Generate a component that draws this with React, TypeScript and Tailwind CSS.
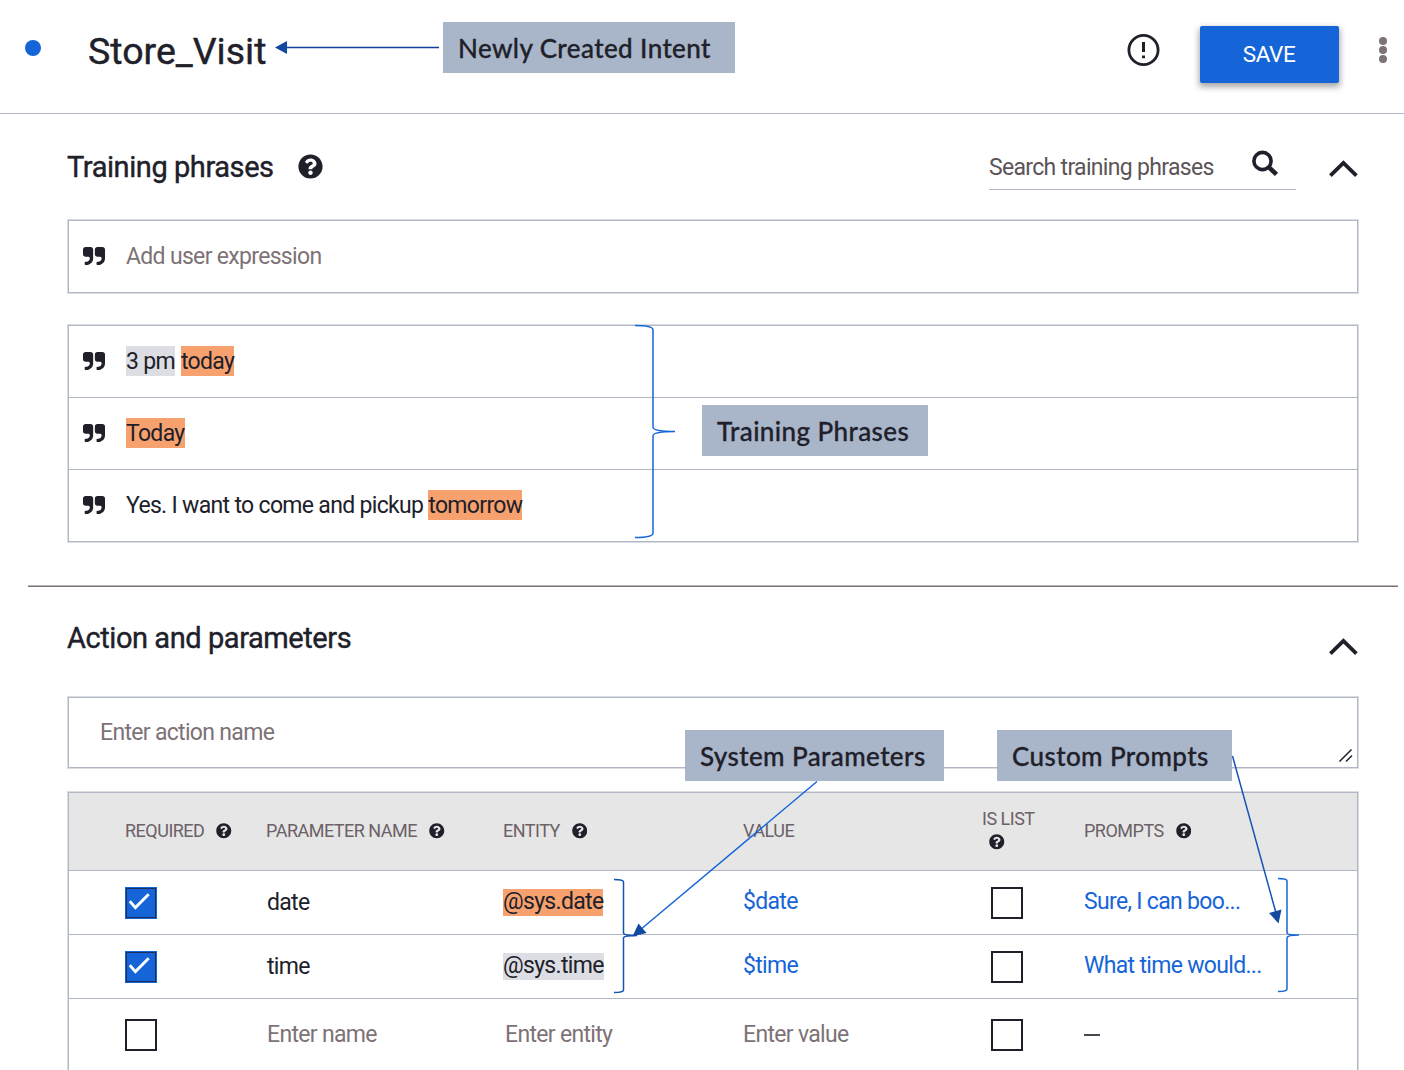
import React from "react";
import { FaQuestionCircle } from "react-icons/fa";

const roboto = "font-['Roboto','Liberation_Sans',sans-serif]";
const box = "border border-[#b0b6c3] shadow-[0_0_0_1px_#dadde3]";
const columns = "grid grid-cols-[141px_237px_240px_239px_102px_1fr] items-center pl-[56px]";
const heading = "-ml-px text-[29px] tracking-[-0.43px] text-[#20202a] [-webkit-text-stroke:0.4px_#20202a]";

function Help({ className = "" }: { className?: string }) {
  return <FaQuestionCircle className={`size-[15.5px] shrink-0 text-[#20202a] ${className}`} />;
}

function Chevron({ className = "" }: { className?: string }) {
  return (
    <svg className={`h-[20px] w-[30px] shrink-0 ${className}`} viewBox="0 0 30 20" fill="none" stroke="#20202a" strokeWidth="3.8">
      <path d="M2.4 16.7 15.4 3.9 28.4 16.7" />
    </svg>
  );
}

function Quote() {
  return (
    <svg viewBox="0 128 1664 1408" preserveAspectRatio="none" className="-mt-[2px] h-[18px] w-[22px] shrink-0" fill="#20202a">
      <path d="M768 320v704q0 104-40.5 198.5t-109.5 163.5-163.5 109.5-198.5 40.5h-64q-26 0-45-19t-19-45v-128q0-26 19-45t45-19h64q106 0 181-75t75-181v-32q0-40-28-68t-68-28h-224q-80 0-136-56t-56-136v-384q0-80 56-136t136-56h384q80 0 136 56t56 136z" />
      <path d="M1664 320v704q0 104-40.5 198.5t-109.5 163.5-163.5 109.5-198.5 40.5h-64q-26 0-45-19t-19-45v-128q0-26 19-45t45-19h64q106 0 181-75t75-181v-32q0-40-28-68t-68-28h-224q-80 0-136-56t-56-136v-384q0-80 56-136t136-56h384q80 0 136 56t56 136z" />
    </svg>
  );
}

function Mark({ tone, children }: { tone: "orange" | "gray"; children: React.ReactNode }) {
  return (
    <span className={`flex h-[30px] items-center whitespace-nowrap ${tone === "orange" ? "bg-[#f7a26e]" : "bg-[#dcdee3]"}`}>
      {children}
    </span>
  );
}

function PhraseRow({ children }: { children: React.ReactNode }) {
  return (
    <div className="flex h-[72px] items-center border-b border-[#b0b6c3] pl-[14px] last:h-[71px] last:border-b-0">
      <Quote />
      <div className="-mt-px ml-[21px] flex items-center whitespace-pre text-[#20202a]">{children}</div>
    </div>
  );
}

function Checkbox({ checked = false, className = "" }: { checked?: boolean; className?: string }) {
  return (
    <span
      className={`block size-[32px] ${className} ${
        checked ? "border border-[#1565d8] bg-[#1565d8] outline outline-[#1b2f5c] -outline-offset-2" : "border-2 border-[#20202a] bg-white"
      }`}
    >
      {checked && (
        <svg viewBox="0 0 30 30" className="size-[30px]" fill="none" stroke="#fff" strokeWidth="2.8">
          <path d="M3.8 13.3 9.4 19.6 22.7 6.2" />
        </svg>
      )}
    </span>
  );
}

function HeaderCell({ label, help = true }: { label: string; help?: boolean }) {
  return (
    <div className="flex items-center gap-[12px] pb-[1px] whitespace-nowrap">
      <span>{label}</span>
      {help && <Help />}
    </div>
  );
}

type Param = { name: string; entity: string; tone: "orange" | "gray"; value: string; prompt: string };

const params: Param[] = [
  { name: "date", entity: "@sys.date", tone: "orange", value: "$date", prompt: "Sure, I can boo..." },
  { name: "time", entity: "@sys.time", tone: "gray", value: "$time", prompt: "What time would..." },
];

function Callout({ text, className }: { text: string; className: string }) {
  return (
    <div
      className={`absolute flex h-[51px] items-center whitespace-nowrap bg-[#a9b5c8] pl-[15px] font-['Lato','Open_Sans',sans-serif] text-[26px] leading-none font-medium tracking-[0.4px] text-[#20202a] [-webkit-text-stroke:0.3px_#20202a] ${className}`}
    >
      {text}
    </div>
  );
}

export default function App() {
  return (
    <div className={`relative h-[1070px] w-[1404px] overflow-hidden bg-white text-[23px] leading-none tracking-[-0.68px] ${roboto}`}>
      <header className="flex h-[114px] items-start border-b border-[#b0b6c3] pl-[25px]">
        <span className="mt-[40px] size-[16px] rounded-full bg-[#1565d8]" />
        <h1 className="mt-[32px] ml-[47px] text-[37.5px] leading-[38px] tracking-normal text-[#20202a] [-webkit-text-stroke:0.4px_#20202a]">Store_Visit</h1>
        <svg className="mt-[33px] ml-auto size-[34px]" viewBox="0 0 34 34" fill="none" stroke="#20202a">
          <circle cx="17.5" cy="17" r="14.6" strokeWidth="2.8" />
          <path d="M17.5 9v10M17.5 22.4v2.8" strokeWidth="3" />
        </svg>
        <button className="mt-[26px] ml-[40px] flex h-[57px] w-[139px] items-center justify-center rounded-[2px] bg-[#1565d8] text-[22.5px] tracking-[-0.4px] text-white shadow-[0_3px_6px_1px_rgba(0,0,0,0.35)]">
          <span className="-mt-px -ml-px">SAVE</span>
        </button>
        <div className="mt-[37px] mr-[17px] ml-[40px] flex flex-col gap-[1px]">
          <span className="size-[8px] rounded-full bg-[#7d7276]" />
          <span className="size-[8px] rounded-full bg-[#7d7276]" />
          <span className="size-[8px] rounded-full bg-[#7d7276]" />
        </div>
      </header>

      <section className="pr-[46px] pl-[68px]">
        <div className="flex h-[106px] items-center">
          <h2 className={heading}>Training phrases</h2>
          <FaQuestionCircle className="-mt-px ml-[24px] size-[25px] text-[#20202a]" />
          <div className="mt-[-6px] ml-auto flex h-[52px] w-[307px] items-start border-b border-[#b0b6c3] text-[#5c5459]">
            <span className="mt-[18px]">Search training phrases</span>
            <svg className="mt-[11px] mr-[17px] ml-auto size-[28px]" viewBox="0 0 28 28" fill="none" stroke="#20202a">
              <circle cx="11.5" cy="12" r="8.6" strokeWidth="3.6" />
              <path d="m17.5 17.8 8 7.6" strokeWidth="4.6" />
            </svg>
          </div>
          <Chevron className="mt-[4px] ml-[32px]" />
        </div>

        <div className={`flex h-[73px] items-center pl-[14px] ${box}`}>
          <Quote />
          <span className="-mt-px ml-[21px] text-[#7d7276]">Add user expression</span>
        </div>

        <div className={`mt-[32px] h-[217px] ${box}`}>
          <PhraseRow>
            <Mark tone="gray">3 pm</Mark>
            <span className="w-[6px]" />
            <Mark tone="orange">today</Mark>
          </PhraseRow>
          <PhraseRow>
            <Mark tone="orange">Today</Mark>
          </PhraseRow>
          <PhraseRow>
            <span>Yes. I want to come and pickup </span>
            <Mark tone="orange">tomorrow</Mark>
          </PhraseRow>
        </div>
      </section>

      <div className="mt-[43px] mr-[6px] ml-[28px] h-[2px] border-t border-b border-t-[#b5b2b8] border-b-[#7d7276]" />

      <section className="pr-[46px] pl-[68px]">
        <div className="flex h-[110px] items-start justify-between">
          <h2 className={`mt-[37px] ${heading}`}>Action and parameters</h2>
          <Chevron className="mt-[50px]" />
        </div>

        <div className={`flex h-[71px] items-center justify-between pl-[31px] ${box}`}>
          <span className="text-[#7d7276]">Enter action name</span>
          <svg className="mr-[3px] mb-[3px] size-[16px] self-end" viewBox="0 0 16 16" stroke="#20202a" strokeWidth="1.5">
            <path d="M1.5 13.5 13.5 1.5M8 13.5l6-6" />
          </svg>
        </div>

        <div className={`mt-[24px] h-[290px] ${box}`}>
          <div className={`h-[78px] border-b border-[#b0b6c3] bg-[#e6e6e6] text-[18px] tracking-[-0.5px] text-[#6b6166] ${columns}`}>
            <HeaderCell label="REQUIRED" />
            <HeaderCell label="PARAMETER NAME" />
            <HeaderCell label="ENTITY" />
            <HeaderCell label="VALUE" help={false} />
            <div className="flex flex-col gap-[6px] pb-[3px]">
              <span>IS LIST</span>
              <Help className="ml-[7px]" />
            </div>
            <HeaderCell label="PROMPTS" />
          </div>
          {params.map((p) => (
            <div key={p.name} className={`h-[64px] border-b border-[#b0b6c3] ${columns}`}>
              <Checkbox checked />
              <span className="pl-px text-[#20202a]">{p.name}</span>
              <div className="flex text-[#20202a]">
                <span className={`-mt-px flex h-[27px] items-center pb-px ${p.tone === "orange" ? "bg-[#f7a26e]" : "bg-[#dcdee3]"}`}>{p.entity}</span>
              </div>
              <span className="-mt-[2px] text-[#1565d8]">{p.value}</span>
              <Checkbox className="ml-[9px]" />
              <span className="-mt-[2px] text-[#1565d8]">{p.prompt}</span>
            </div>
          ))}
          <div className={`h-[71px] text-[#7d7276] ${columns}`}>
            <Checkbox />
            <span className="pl-px">Enter name</span>
            <span className="pl-[2px]">Enter entity</span>
            <span>Enter value</span>
            <Checkbox className="ml-[9px]" />
            <span className="h-[2px] w-[16px] bg-[#4a464f]" />
          </div>
        </div>
      </section>

      <svg className="pointer-events-none absolute inset-0" width="1404" height="1070" fill="none" stroke="#1565d8" strokeWidth="1.5">
        <path d="M286 47.5H439" stroke="#0f3f96" />
        <path d="M275 47.5 287 41v13z" fill="#124a9f" stroke="none" />
        <path d="M635 325.5Q653 325.5 653 330V427Q653 431.5 675 431.5Q653 431.5 653 436V533Q653 537.5 635 537.5" />
        <path d="M614 879.5Q623.5 879.5 623.5 882V933Q623.5 935.5 637 935.5Q623.5 935.5 623.5 938V990Q623.5 992.5 614 992.5" stroke="#1354b5" />
        <path d="M1278 878.5Q1287 878.5 1287 881V933Q1287 935 1299 935Q1287 935 1287 938V989Q1287 991.5 1278 991.5" />
        <path d="M817 781.5 640 930" />
        <path d="M632.5 936.5 638.5 923.5 646.5 933z" fill="#124a9f" stroke="none" />
        <path d="M1232.5 756 1276 913" stroke="#1354b5" />
        <path d="M1278.5 923.5 1269 913 1281.5 909.5z" fill="#124a9f" stroke="none" />
      </svg>

      <Callout text="Newly Created Intent" className="top-[22px] left-[443px] w-[292px]" />
      <Callout text="Training Phrases" className="top-[405px] left-[702px] w-[226px]" />
      <Callout text="System Parameters" className="top-[730px] left-[685px] w-[259px]" />
      <Callout text="Custom Prompts" className="top-[730px] left-[997px] w-[235px]" />
    </div>
  );
}
